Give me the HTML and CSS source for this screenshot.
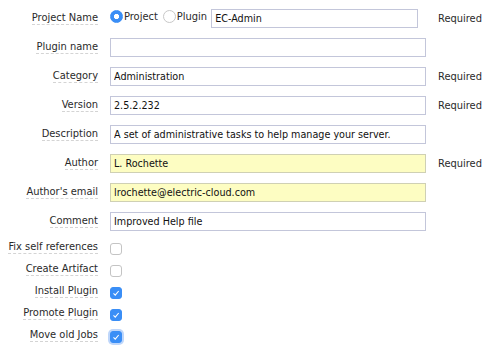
FILE: index.html
```html
<!DOCTYPE html>
<html lang="en">
<head>
    <meta charset="UTF-8">
    <title>Plugin Settings</title>
    <link rel="stylesheet" href="styles.css">
</head>
<body>
    <form class="plugin-form">
        <div class="row">
            <div class="field-label"><span>Project Name</span></div>
            <div class="field">
                <label class="radio"><span class="radio-dot checked"></span>Project</label>
                <label class="radio"><span class="radio-dot"></span>Plugin</label>
                <input type="text" class="text-input project-input" value="EC-Admin">
            </div>
            <div class="note">Required</div>
        </div>
        <div class="row">
            <div class="field-label"><span>Plugin name</span></div>
            <div class="field"><input type="text" class="text-input" value=""></div>
        </div>
        <div class="row">
            <div class="field-label"><span>Category</span></div>
            <div class="field"><input type="text" class="text-input" value="Administration"></div>
            <div class="note">Required</div>
        </div>
        <div class="row">
            <div class="field-label"><span>Version</span></div>
            <div class="field"><input type="text" class="text-input" value="2.5.2.232"></div>
            <div class="note">Required</div>
        </div>
        <div class="row">
            <div class="field-label"><span>Description</span></div>
            <div class="field"><input type="text" class="text-input" value="A set of administrative tasks to help manage your server."></div>
        </div>
        <div class="row">
            <div class="field-label"><span>Author</span></div>
            <div class="field"><input type="text" class="text-input highlight" value="L. Rochette"></div>
            <div class="note">Required</div>
        </div>
        <div class="row">
            <div class="field-label"><span>Author's email</span></div>
            <div class="field"><input type="text" class="text-input highlight" value="lrochette@electric-cloud.com"></div>
        </div>
        <div class="row">
            <div class="field-label"><span>Comment</span></div>
            <div class="field"><input type="text" class="text-input" value="Improved Help file"></div>
        </div>

        <div class="row check-row">
            <div class="field-label"><span>Fix self references</span></div>
            <div class="field"><span class="checkbox"></span></div>
        </div>
        <div class="row check-row">
            <div class="field-label"><span>Create Artifact</span></div>
            <div class="field"><span class="checkbox"></span></div>
        </div>
        <div class="row check-row">
            <div class="field-label"><span>Install Plugin</span></div>
            <div class="field">
                <span class="checkbox checked"><svg viewBox="0 0 12 12"><path d="M3 6.4 5.1 8.5 9.2 3.6"/></svg></span>
            </div>
        </div>
        <div class="row check-row">
            <div class="field-label"><span>Promote Plugin</span></div>
            <div class="field">
                <span class="checkbox checked"><svg viewBox="0 0 12 12"><path d="M3 6.4 5.1 8.5 9.2 3.6"/></svg></span>
            </div>
        </div>
        <div class="row check-row">
            <div class="field-label"><span>Move old Jobs</span></div>
            <div class="field">
                <span class="checkbox checked focused"><svg viewBox="0 0 12 12"><path d="M3 6.4 5.1 8.5 9.2 3.6"/></svg></span>
            </div>
        </div>
    </form>
</body>
</html>
```

FILE: styles.css
```css
body {
    margin: 0;
    background-color: #fff;
    font-family: "DejaVu Sans Condensed", "Liberation Sans", sans-serif;
    font-stretch: condensed;
    font-size: 11px;
    color: #2a2a2a;
}
.plugin-form {
    padding-top: 4px;
}
.row {
    display: grid;
    grid-template-columns: 98px 316px auto;
    column-gap: 12px;
    align-items: center;
    height: 29px;
}
.check-row {
    height: 22px;
}
.field-label {
    text-align: right;
    white-space: nowrap;
    padding-bottom: 2px;
}
.field-label span {
    border-bottom: 1px dashed #d4d4d4;
}
.field {
    display: flex;
    align-items: center;
}
.text-input {
    box-sizing: border-box;
    width: 100%;
    height: 19px;
    margin: 0;
    padding: 0 3px;
    border: 1px solid #c3c6da;
    background-color: #fff;
    font-family: inherit;
    font-stretch: inherit;
    font-size: 10.7px;
    color: #111;
    outline: none;
}
.text-input.highlight {
    background-color: #fdfdc2;
    border-color: #cfd0b4;
}
.project-input {
    width: 207px;
    margin-left: 4px;
}
.radio {
    display: flex;
    align-items: center;
    margin-bottom: 4px;
    margin-right: 5px;
    font-size: 11px;
    color: #2a2a2a;
}
.radio:last-of-type {
    margin-right: 0;
}
.radio-dot {
    box-sizing: border-box;
    width: 13px;
    height: 13px;
    margin-right: 1px;
    border: 1px solid #c8c8c8;
    border-radius: 50%;
    background-color: #fff;
}
.radio-dot.checked {
    border-color: #3a8ef6;
    background: radial-gradient(circle, #fff 0 2.4px, #3a8ef6 2.9px);
}
.note {
    color: #2a2a2a;
}
.checkbox {
    box-sizing: border-box;
    display: block;
    width: 12px;
    height: 12px;
    margin-top: 3px;
    border: 1px solid #c4c4c4;
    border-radius: 3px;
    background-color: #fff;
}
.checkbox.checked {
    border-color: #3a8ef6;
    background-color: #3a8ef6;
}
.checkbox svg {
    display: block;
    width: 10px;
    height: 10px;
    fill: none;
    stroke: #fff;
    stroke-width: 1.3;
}
.checkbox.focused {
    box-shadow: 0 0 0 2px rgba(110, 165, 245, 0.45);
}
```
